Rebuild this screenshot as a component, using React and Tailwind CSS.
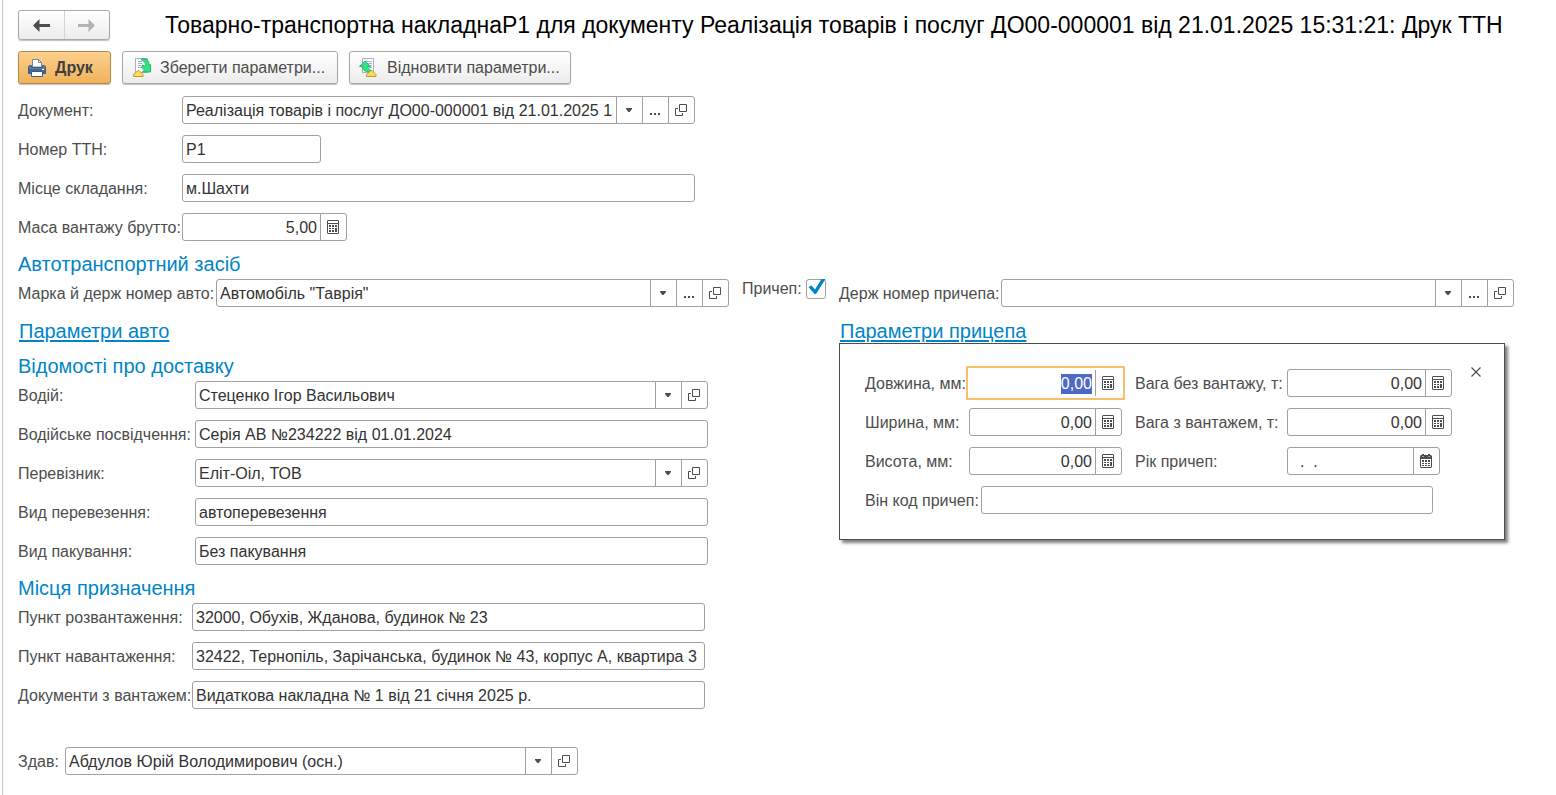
import { useEffect, useRef } from 'react';

const CaretIcon = () => (
  <svg width="6" height="4" viewBox="0 0 6 4" aria-hidden="true">
    <path d="M0 0h6v1L3.6 4H2.4L0 1z" fill="#4d4d4d" />
  </svg>
);

const DotsIcon = () => (
  <svg width="10" height="10" viewBox="0 0 10 10" aria-hidden="true">
    <path d="M0 8h2v2H0zM4 8h2v2H4zM8 8h2v2H8z" fill="#4d4d4d" />
  </svg>
);

const OpenIcon = () => (
  <svg width="12" height="12" viewBox="0 0 12 12" fill="none" stroke="#4d4d4d" aria-hidden="true">
    <path d="M4.5.5h7v7h-7z" />
    <path d="M3 4.5H.5v7h7V9" />
  </svg>
);

const CalcIcon = () => (
  <svg width="12" height="14" viewBox="0 0 12 14" aria-hidden="true">
    <rect x=".5" y=".5" width="11" height="13" rx=".5" fill="none" stroke="#4d4d4d" />
    <path
      d="M0 3h12v1H0zM2 5h2v2H2zM5 5h2v2H5zM8 5h2v2H8zM2 8h2v1H2zM5 8h2v1H5zM2 10h2v2H2zM5 10h2v2H5zM8 8h2v4H8z"
      fill="#4d4d4d"
    />
  </svg>
);

const CalendarIcon = () => (
  <svg width="12" height="14" viewBox="0 0 12 14" aria-hidden="true">
    <path d="M1 1h1V0h2v1h4V0h2v1h1l1 1v11l-1 1H1l-1-1V2z" fill="#4d4d4d" />
    <path d="M1 5h10v8H1z" fill="#fff" />
    <path
      d="M2 6h2v2H2zM5 6h2v2H5zM8 6h2v2H8zM2 9h2v1H2zM5 9h2v1H5zM8 9h2v1H8zM2 11h2v1H2zM5 11h2v1H5zM8 11h2v1H8z"
      fill="#4d4d4d"
    />
    <path d="M2.500 2h1v1h-1zM8.500 2h1v1h-1z" fill="#fff" />
  </svg>
);

const PrinterIcon = () => (
  <svg width="18" height="18" viewBox="0 0 18 18" aria-hidden="true">
    <path d="M4.500 8V.5h6l3 3V8z" fill="#fff" stroke="#7d8794" />
    <path d="M10.500.5v3h3" fill="none" stroke="#7d8794" />
    <path d="M1.500 6.500h2v2h11v-2h2l1 1v7H.5v-7z" fill="#5b7fa8" stroke="#3d5c85" />
    <path d="M1 10h16v4H1z" fill="#44668f" />
    <path d="M14 10h2v1h-2z" fill="#fff" />
    <path d="M3.500 12.500h11v5h-11z" fill="#fff" stroke="#3d5c85" />
  </svg>
);

const SaveIcon = () => (
  <svg width="18" height="19" viewBox="0 0 18 19" aria-hidden="true">
    <path d="M2.500.5h12v14h-12z" fill="#fff" stroke="#a3b1c0" />
    <path d="M5 3h4v1H5zM5 5h4v1H5zM5 7h3v1H5zM5 9h4v1H5z" fill="#a3b1c0" />
    <path
      d="M8.500 1c5-1 8 2 7.500 6l1.500-.5V14H9.500l1.800-2L9 9.500V7l3 1.500C13 6 12 3.500 8.500 2z"
      fill="#2fe585"
      stroke="#18a45a"
      strokeWidth=".8"
    />
    <path d="M5 12.500h1l4 4v2H.5v-2z" fill="#f8de5a" stroke="#b8912a" strokeWidth=".9" />
  </svg>
);

const RestoreIcon = () => (
  <svg width="18" height="19" viewBox="0 0 18 19" aria-hidden="true">
    <path d="M3.500.5h11v14h-11z" fill="#fff" stroke="#a3b1c0" />
    <path d="M7 3h6v1H7zM9 5h4v1H9zM10 7h3v1h-3zM10 9h3v1h-3z" fill="#a3b1c0" />
    <path
      d="M6 3l5.500 5.500H9c0 2 1 3 3 4-4 2.500-8.500.5-8.500-4h-3z"
      fill="#2fe585"
      stroke="#18a45a"
      strokeWidth=".8"
    />
    <path d="M12 12.500h1l4 4v2H7.500v-2z" fill="#f8de5a" stroke="#b8912a" strokeWidth=".9" />
  </svg>
);

const ArrowIcon = ({ color, flip }) => (
  <svg width="17" height="13" viewBox="0 0 17 13" aria-hidden="true">
    <path
      d={flip ? 'M17 6.500L10.500 0v5H0v3h10.500v5z' : 'M0 6.500L6.500 0v5H17v3H6.500v5z'}
      fill={color}
    />
  </svg>
);

const kinds = {
  list: ['Вибрати зі списку', CaretIcon],
  pick: ['Показати всі', DotsIcon],
  open: ['Відкрити', OpenIcon],
  calc: ['Калькулятор', CalcIcon],
  date: ['Календар', CalendarIcon],
};

function Box({ id, value = '', actions = [], numeric, focused, className = 'w-[513px]' }) {
  const ref = useRef(null);
  useEffect(() => {
    if (focused) {
      ref.current.focus();
      ref.current.select();
    }
  }, [focused]);
  return (
    <div
      className={`flex h-7 min-w-0 border bg-white ${
        focused ? 'border-white outline-2 outline-[#fbbf6b] outline-offset-1' : 'rounded-[3px] border-[#a0a0a0]'
      } ${className}`}
    >
      <input
        id={id}
        ref={ref}
        type="text"
        defaultValue={value}
        className={`min-w-0 flex-1 bg-transparent px-[3px] pt-0.5 text-[#333] outline-none selection:bg-[#4f69c6] selection:text-white ${
          numeric ? 'text-right' : ''
        }`}
      />
      {actions.map((a) => {
        const [title, Icon] = kinds[a];
        return (
          <button
            key={a}
            type="button"
            aria-label={title}
            className="flex w-[26px] shrink-0 items-center justify-center border-l border-[#a0a0a0] pr-px"
          >
            <Icon />
          </button>
        );
      })}
    </div>
  );
}

function Field({ id, label, labelClass = '', ...box }) {
  return (
    <div className="flex items-center">
      <label htmlFor={id} className={`shrink-0 pt-0.5 whitespace-nowrap ${labelClass}`}>
        {label}
      </label>
      <Box id={id} {...box} />
    </div>
  );
}

const Heading = ({ children }) => (
  <h2 className="text-xl leading-[30px] text-[#0085c8]">{children}</h2>
);

const raised =
  'flex items-center rounded-[3px] border border-[#a8a8a8] bg-linear-to-b from-white to-[#ececec] shadow-[0_1px_1px_rgba(0,0,0,0.25)]';

export default function App() {
  return (
    <main className="ml-0.5 min-h-screen border-l border-[#c3ccd3] bg-white pt-2.5 pr-4 pb-5 pl-[15px] font-['Liberation_Sans',Arial,sans-serif] text-base leading-5 text-[#4d4d4d]">
      <header className="flex items-center">
        <nav className={`${raised} h-[30px] w-[92px] shrink-0`}>
          <button type="button" aria-label="Назад" className="flex h-full flex-1 items-center justify-center border-r border-[#d5d5d5]">
            <ArrowIcon color="#4d4d4d" />
          </button>
          <button type="button" aria-label="Вперед" className="flex h-full flex-1 items-center justify-center">
            <ArrowIcon color="#b3b3b3" flip />
          </button>
        </nav>
        <h1 className="ml-[55px] text-[23px] leading-[30px] whitespace-nowrap text-black">
          Товарно-транспортна накладнаР1 для документу Реалізація товарів і послуг ДО00-000001 від 21.01.2025 15:31:21: Друк ТТН
        </h1>
      </header>

      <div className="mt-[11px] flex gap-[11px]">
        <button
          type="button"
          className="flex h-[33px] w-[93px] items-center gap-[9px] rounded-[3px] border border-[#b08a4e] bg-linear-to-b from-[#fcd08c] to-[#f0b25a] pl-[9px] font-bold text-[#404040] shadow-[0_1px_1px_rgba(0,0,0,0.25)]"
        >
          <PrinterIcon />
          Друк
        </button>
        <button type="button" className={`${raised} h-[33px] w-[216px] gap-[9px] pl-2.5`}>
          <SaveIcon />
          Зберегти параметри...
        </button>
        <button type="button" className={`${raised} h-[33px] w-[222px] gap-[10px] pl-[9px]`}>
          <RestoreIcon />
          Відновити параметри...
        </button>
      </div>

      <section className="mt-3 flex flex-col gap-[11px]">
        <Field id="doc" label="Документ:" labelClass="w-[164px]" value="Реалізація товарів і послуг ДО00-000001 від 21.01.2025 15:31:21" actions={['list', 'pick', 'open']} />
        <Field id="num" label="Номер ТТН:" labelClass="w-[164px]" value="Р1" className="w-[139px]" />
        <Field id="place" label="Місце складання:" labelClass="w-[164px]" value="м.Шахти" />
        <Field id="mass" label="Маса вантажу брутто:" labelClass="w-[164px]" value="5,00" numeric actions={['calc']} className="w-[165px]" />
      </section>

      <section className="mt-2">
        <Heading>Автотранспортний засіб</Heading>
        <div className="flex items-start">
          <div className="w-[724px] shrink-0">
            <Field id="car" label="Марка й держ номер авто:" labelClass="w-[198px]" value={'Автомобіль "Таврія"'} actions={['list', 'pick', 'open']} />
            <a href="#car-params" className="mt-3 ml-px inline-block text-xl leading-6 text-[#0085c8] underline underline-offset-2">
              Параметри авто
            </a>
          </div>
          <label className="flex w-[97px] shrink-0 items-center gap-1">
            Причеп:
            <span className="relative flex">
              <input type="checkbox" defaultChecked className="peer size-5 appearance-none rounded-[3px] border border-[#a0a0a0] bg-white" />
              <svg className="pointer-events-none absolute top-0 left-0.5 hidden peer-checked:block" width="18" height="16" viewBox="0 0 18 16" aria-hidden="true">
                <path d="M.5 8L3.500 6.500 7 10.500 13.500 0H17.500L8 15H6.500z" fill="#0085c8" />
              </svg>
            </span>
          </label>
          <div className="relative min-w-0">
            <Field id="trailer" label="Держ номер причепа:" labelClass="w-[162px]" actions={['list', 'pick', 'open']} />
            <a href="#trailer-params" className="mt-3 ml-px inline-block text-xl leading-6 text-[#0085c8] underline underline-offset-2">
              Параметри прицепа
            </a>
            <div
              id="trailer-params"
              role="dialog"
              aria-label="Параметри прицепа"
              className="absolute top-16 left-0 flex w-[666px] flex-col gap-[11px] border border-[#4d4d4d] bg-white pt-[25px] pb-[25px] pl-[25px] shadow-[3px_3px_3px_rgba(0,0,0,0.5)]"
            >
              <div className="grid grid-cols-[270px_1fr] gap-y-[11px]">
                <Field id="len" label="Довжина, мм:" labelClass="w-[104px]" value="0,00" numeric focused actions={['calc']} className="w-[153px]" />
                <Field id="w1" label="Вага без вантажу, т:" labelClass="w-[152px]" value="0,00" numeric actions={['calc']} className="w-[165px]" />
                <Field id="wid" label="Ширина, мм:" labelClass="w-[104px]" value="0,00" numeric actions={['calc']} className="w-[153px]" />
                <Field id="w2" label="Вага з вантажем, т:" labelClass="w-[152px]" value="0,00" numeric actions={['calc']} className="w-[165px]" />
                <Field id="hei" label="Висота, мм:" labelClass="w-[104px]" value="0,00" numeric actions={['calc']} className="w-[153px]" />
                <Field id="year" label="Рік причеп:" labelClass="w-[152px]" value="  .  ." actions={['date']} className="w-[153px]" />
              </div>
              <Field id="vin" label="Він код причеп:" labelClass="w-[116px]" className="w-[452px]" />
              <button type="button" aria-label="Закрити" className="absolute top-[18px] right-[18px] flex size-5 items-center justify-center">
                <svg width="10" height="10" viewBox="0 0 10 10" stroke="#4d4d4d" strokeWidth="1.200" aria-hidden="true">
                  <path d="M.5.5l9 9M9.500.5l-9 9" />
                </svg>
              </button>
            </div>
          </div>
        </div>
      </section>

      <section className="mt-2">
        <Heading>Відомості про доставку</Heading>
        <div className="flex flex-col gap-[11px]">
          <Field id="driver" label="Водій:" labelClass="w-[177px]" value="Стеценко Ігор Васильович" actions={['list', 'open']} />
          <Field id="licence" label="Водійське посвідчення:" labelClass="w-[177px]" value="Серія АВ №234222 від 01.01.2024" />
          <Field id="carrier" label="Перевізник:" labelClass="w-[177px]" value="Еліт-Оіл, ТОВ" actions={['list', 'open']} />
          <Field id="kind" label="Вид перевезення:" labelClass="w-[177px]" value="автоперевезення" />
          <Field id="pack" label="Вид пакування:" labelClass="w-[177px]" value="Без пакування" />
        </div>
      </section>

      <section className="mt-2">
        <Heading>Місця призначення</Heading>
        <div className="flex flex-col gap-[11px]">
          <Field id="unload" label="Пункт розвантаження:" labelClass="w-[174px]" value="32000, Обухів, Жданова, будинок № 23" />
          <Field id="load" label="Пункт навантаження:" labelClass="w-[174px]" value="32422, Тернопіль, Зарічанська, будинок № 43, корпус А, квартира 3" />
          <Field id="docs" label="Документи з вантажем:" labelClass="w-[174px]" value="Видаткова накладна № 1 від 21 січня 2025 р." />
        </div>
      </section>

      <section className="mt-[38px]">
        <Field id="sender" label="Здав:" labelClass="w-[47px]" value="Абдулов Юрій Володимирович (осн.)" actions={['list', 'open']} />
      </section>
    </main>
  );
}
